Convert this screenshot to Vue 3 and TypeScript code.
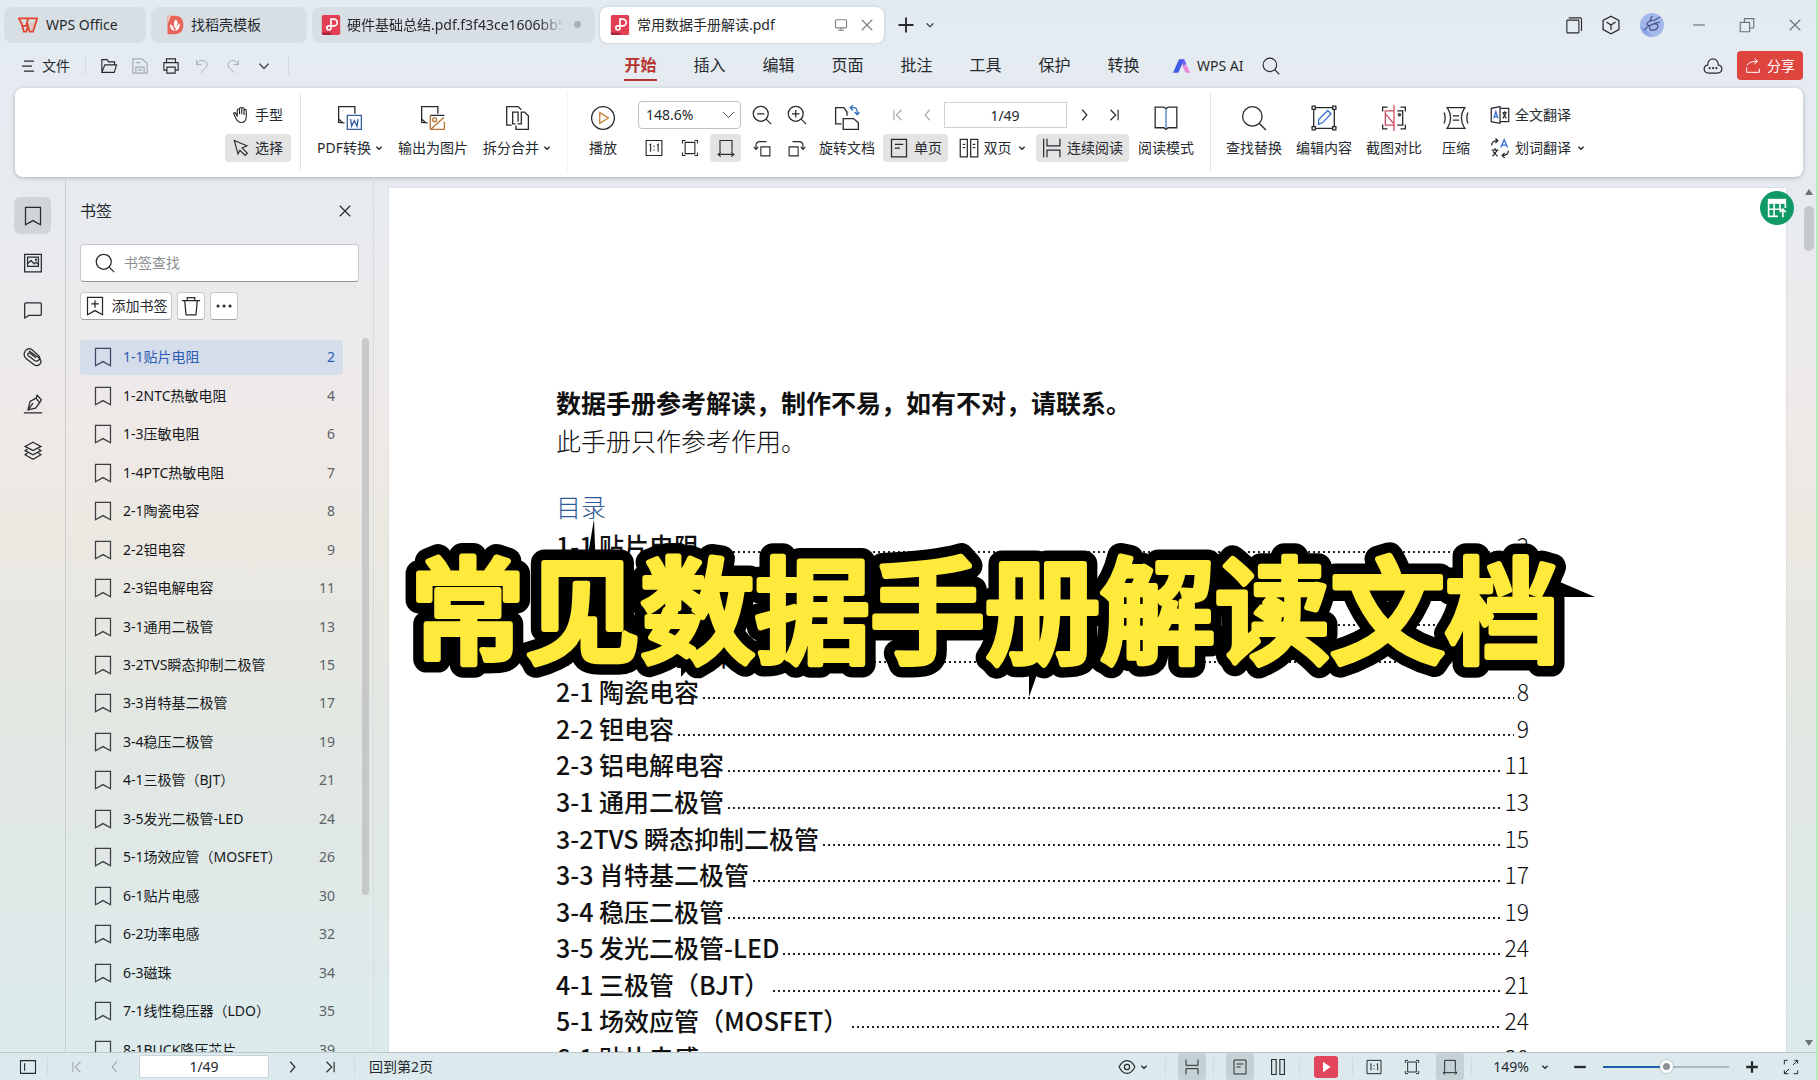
<script setup lang="ts">
import { ref } from 'vue'

interface Entry { label: string; page: number }

const bookmarks: Entry[] = [
  { label: '1-1贴片电阻', page: 2 },
  { label: '1-2NTC热敏电阻', page: 4 },
  { label: '1-3压敏电阻', page: 6 },
  { label: '1-4PTC热敏电阻', page: 7 },
  { label: '2-1陶瓷电容', page: 8 },
  { label: '2-2钽电容', page: 9 },
  { label: '2-3铝电解电容', page: 11 },
  { label: '3-1通用二极管', page: 13 },
  { label: '3-2TVS瞬态抑制二极管', page: 15 },
  { label: '3-3肖特基二极管', page: 17 },
  { label: '3-4稳压二极管', page: 19 },
  { label: '4-1三极管（BJT）', page: 21 },
  { label: '3-5发光二极管-LED', page: 24 },
  { label: '5-1场效应管（MOSFET）', page: 26 },
  { label: '6-1贴片电感', page: 30 },
  { label: '6-2功率电感', page: 32 },
  { label: '6-3磁珠', page: 34 },
  { label: '7-1线性稳压器（LDO）', page: 35 },
  { label: '8-1BUCK降压芯片', page: 39 },
]

const contents: Entry[] = [
  { label: '1-1 贴片电阻', page: 2 },
  { label: '1-2NTC 热敏电阻', page: 4 },
  { label: '1-3 压敏电阻', page: 6 },
  { label: '1-4PTC 热敏电阻', page: 7 },
  { label: '2-1 陶瓷电容', page: 8 },
  { label: '2-2 钽电容', page: 9 },
  { label: '2-3 铝电解电容', page: 11 },
  { label: '3-1 通用二极管', page: 13 },
  { label: '3-2TVS 瞬态抑制二极管', page: 15 },
  { label: '3-3 肖特基二极管', page: 17 },
  { label: '3-4 稳压二极管', page: 19 },
  { label: '3-5 发光二极管-LED', page: 24 },
  { label: '4-1 三极管（BJT）', page: 21 },
  { label: '5-1 场效应管（MOSFET）', page: 24 },
  { label: '6-1 贴片电感', page: 30 },
]

const menus = ['开始', '插入', '编辑', '页面', '批注', '工具', '保护', '转换']
const rail = [
  { icon: 'bookmark', name: '书签' },
  { icon: 'thumb', name: '缩略图' },
  { icon: 'comment', name: '批注' },
  { icon: 'clip', name: '附件' },
  { icon: 'sign', name: '签名' },
  { icon: 'layers', name: '图层' },
]
const activeMenu = ref('开始')
const activeRail = ref('bookmark')
const selected = ref(0)
const page = ref('1/49')
const zoom = ref(50)
</script>

<template>
  <svg class="sprite" aria-hidden="true">
    <symbol id="bookmark" viewBox="0 0 24 24"><path d="M3 1.500h18v21L12 17.500l-9 5z" /></symbol>
    <symbol id="thumb" viewBox="0 0 24 24"><path d="M2 1.500h20v21H2z M5.500 5h13v11h-13z M5.500 13l4-4 4 4 2-2 3 3" /><circle cx="15.500" cy="8" r=".6" /></symbol>
    <symbol id="comment" viewBox="0 0 24 24"><path d="M3.500 3.500h17a1.500 1.500 0 0 1 1.500 1.500v12a1.500 1.500 0 0 1-1.500 1.500H7l-5 3V5a1.500 1.500 0 0 1 1.500-1.500z" /></symbol>
    <symbol id="clip" viewBox="0 0 24 24"><path d="M7 4.500l12 8.500c6 5 0 12-6 8L4 14C-2 9 4-1 10.500 3l8 7c4 4-1 9-5 6L6.500 10.500c-2-2 0-4 2-3l7 5.500" /></symbol>
    <symbol id="sign" viewBox="0 0 24 24"><path d="M1 22.500h22M6 19l2.500-10 7-4 4.500 5.500-5 6.500zM6 19l6-8M15.500 5l1.500-3.500 5 5.500-2 3.500" /></symbol>
    <symbol id="layers" viewBox="0 0 24 24"><path d="M12 1.500l9.500 5L12 11.500l-9.500-5zM5.500 9.500l-3 2L12 16.500l9.500-5-3-2M5.500 14.500l-3 2L12 22l9.500-5.500-3-2" /></symbol>
    <symbol id="search" viewBox="0 0 24 24"><circle cx="10.500" cy="10.500" r="9" /><path d="M17 17L23 23" /></symbol>
    <symbol id="zoomout" viewBox="0 0 24 24"><circle cx="10.500" cy="10.500" r="9" /><path d="M17 17l6 6M6 10.500h9" /></symbol>
    <symbol id="zoomin" viewBox="0 0 24 24"><circle cx="10.500" cy="10.500" r="9" /><path d="M17 17l6 6M6 10.500h9M10.500 6v9" /></symbol>
    <symbol id="close" viewBox="0 0 24 24"><path d="M3 3l18 18M21 3L3 21" /></symbol>
    <symbol id="plus" viewBox="0 0 24 24"><path d="M12 2v20M2 12h20" /></symbol>
    <symbol id="down" viewBox="0 0 24 24"><path d="M4 8l8 8 8-8" /></symbol>
    <symbol id="left" viewBox="0 0 24 24"><path d="M15 3l-8 9 8 9" /></symbol>
    <symbol id="right" viewBox="0 0 24 24"><path d="M9 3l8 9-8 9" /></symbol>
    <symbol id="first" viewBox="0 0 24 24"><path d="M18 3l-9 9 9 9M5 3v18" /></symbol>
    <symbol id="last" viewBox="0 0 24 24"><path d="M6 3l9 9-9 9M19 3v18" /></symbol>
    <symbol id="wps" viewBox="0 0 24 24"><path d="M1 4h11l-2 9H5.500zM12 4h11l-5 16h-4l-2-7-2 7H7L4 9" fill="none" stroke="#e0452f" stroke-width="2.200" /><path d="M14 9h7l-3 10h-3z" fill="#f07a3c" stroke="none" opacity=".25" /></symbol>
    <symbol id="docer" viewBox="0 0 24 24"><path d="M3 1h8c8 0 11 4 11 11s-3 11-11 11H3z" fill="#e8645a" stroke="none" /><path d="M3 1h4L3 12z" fill="#f8c4b9" stroke="none" /><path d="M13 5c-3 4-3 7-1 11 4-4 4-7 1-11zM6 11c0 5 2 7 5 8 0-4-2-7-5-8zM18 10c-3 2-5 5-6 9 4 0 6-4 6-9z" fill="#fff" stroke="none" /></symbol>
    <symbol id="pdf" viewBox="0 0 24 24"><rect x="1" y="0" width="22" height="24" rx="2" fill="#e23f55" stroke="none" /><path d="M1 21h10l3 3H3a2 2 0 0 1-2-2z" fill="#a8253b" stroke="none" /><path d="M12 14V5h3.500a4 4 0 0 1 0 8H9a2.500 2.500 0 1 0 3 2.500V10" fill="none" stroke="#fff" stroke-width="2" /></symbol>
    <symbol id="screen" viewBox="0 0 24 24"><rect x="2.500" y="3" width="19" height="14" rx="2" /><path d="M12 17v4M7 21h10" /></symbol>
    <symbol id="open" viewBox="0 0 24 24"><path d="M2.500 20.500V3.500h7l2 3h8v4M2.500 20.500l4-10h15.500l-3 10z" /></symbol>
    <symbol id="save" viewBox="0 0 24 24"><path d="M6 21.500H2.500v-19h12l7 6v13H18M6.500 21.500v-8h11v8zM6.500 7.500h6M9 17.500h6" /></symbol>
    <symbol id="print" viewBox="0 0 24 24"><path d="M6 7V2.500h12V7M6 17.500H2.500v-10h19v10H18M6.500 13.500h11v8h-11z" /></symbol>
    <symbol id="undo" viewBox="0 0 24 24"><path d="M4 3v7h7M4 10c3-6 9-8 13-5s3 8-1 11l-6 6" /></symbol>
    <symbol id="redo" viewBox="0 0 24 24"><path d="M20 3v7h-7M20 10C17 4 11 2 7 5s-3 8 1 11l6 6" /></symbol>
    <symbol id="ai" viewBox="0 0 24 24"><path d="M0 21L8 3h7L7 21z" fill="#3d5be8" stroke="none" /><path d="M12 3h3l3 7-5 1z" fill="#6a5cf0" stroke="none" /><path d="M12 11h6l5 10h-6z" fill="#e58ad8" stroke="none" /></symbol>
    <symbol id="hand" viewBox="0 0 24 24"><path d="M7 14V5.500a1.500 1.500 0 0 1 3 0V11 3.500a1.500 1.500 0 0 1 3 0V11 3.500a1.500 1.500 0 0 1 3 0V12 6a1.500 1.500 0 0 1 3 0v8c0 5-2 8-6.500 8-4 0-5.500-2-7-5L2.500 11c-1-2 1.500-3 2.500-1z" /></symbol>
    <symbol id="cursor" viewBox="0 0 24 24"><path d="M3 2l17 7-6.500 3 7 7-3 3-7-7-2.500 5z" /></symbol>
    <symbol id="toword" viewBox="0 0 24 24"><path d="M7 16.500l-5.500-.5V1.500h15V8M1.500 13l4 3.500" /><path d="M9.500 9.500h13v13h-13z" stroke="#3a5d9c" /><path d="M12.500 13l1 6.500 2.500-5 2.500 5 1-6.500" stroke="#2d5aa8" /></symbol>
    <symbol id="toimg" viewBox="0 0 24 24"><path d="M7 16.500l-5.500-.5V1.500h15V8M1.500 13l4 3.500M9.500 9.500h13" /><path d="M9.500 22.500v-13M9.500 22.500h13v-7M10.500 22L22 11.500" stroke="#b87333" /><circle cx="13.500" cy="13.500" r="1.800" stroke="#b87333" /></symbol>
    <symbol id="split" viewBox="0 0 24 24"><path d="M7 18.500H2.500v-17h10.500L16 4.500M10.500 17.500H8V6.500h5v9M12.500 17.500h3.500V6.500h3l3.500 3.500v12.500H11V19" /></symbol>
    <symbol id="play" viewBox="0 0 24 24"><circle cx="12" cy="12" r="10.500" /><path d="M9 7l8 5-8 5z" stroke="#c98232" /></symbol>
    <symbol id="one" viewBox="0 0 24 24"><path d="M1.500 2h21v20h-21zM6 8l1.500-1v10M16 8l1.500-1v10M12 9v1.500M12 14v1.500" /></symbol>
    <symbol id="fit" viewBox="0 0 24 24"><path d="M5.500 4.500h13v15h-13zM2 6V2h4M18 2h4v4M22 18v4h-4M6 22H2v-4" /></symbol>
    <symbol id="width" viewBox="0 0 24 24"><path d="M4 17V2h16v15M1.500 20.500h21M5 17.500l-3.500 3L5 23.500M19 17.500l3.500 3-3.500 3" /></symbol>
    <symbol id="rotl" viewBox="0 0 24 24"><path d="M10.500 10.500h12v12h-12zM18 3.500H9q-5 0-5 6v4M1 10.500l3 3.500 3-3.500" /></symbol>
    <symbol id="rotr" viewBox="0 0 24 24"><path d="M1.500 10.500h12v12h-12zM6 3.500h9q5 0 5 6v4M17 10.500l3 3.500 3-3.500" /></symbol>
    <symbol id="rotdoc" viewBox="0 0 24 24"><path d="M7 17.500H1.500v-15H9l3 4V10M8.500 22.500v-10H18l4.500 4v6z" /><path d="M16 2.500h3q2.500 0 2.500 6M17.500 0L15 2.500 17.500 5M19 6.500l2.500 2.500 2-2.500" stroke="#2f6db5" /></symbol>
    <symbol id="single" viewBox="0 0 24 24"><path d="M3 1.500h18v21H3zM7 7.500h10M7 12h6" /></symbol>
    <symbol id="double" viewBox="0 0 24 24"><path d="M1.500 1.500h8.500v21H1.500zM14 1.500h8.500v21H14zM4.500 7.500h3M4.500 11.500h3M16.500 7.500h3M16.500 11.500h3" /></symbol>
    <symbol id="pages" viewBox="0 0 24 24"><path d="M3.500 2h6v20h-6zM14.500 2h6v20h-6z" /></symbol>
    <symbol id="cont" viewBox="0 0 24 24"><path d="M6 1v8.500h15.500V1M6 23v-8.500h15.500V23M2 1v22" /></symbol>
    <symbol id="flow" viewBox="0 0 24 24"><path d="M3 1v8.500h18V1M3 23v-8.500h18V23" /></symbol>
    <symbol id="book" viewBox="0 0 24 24"><path d="M12 3.500L10 2H2v19h8l2 1.500 2-1.500h8V2h-8z" /><path d="M12 4v17" stroke="#3f7fc1" /></symbol>
    <symbol id="editbox" viewBox="0 0 24 24"><path d="M4 2.500h16M4 21.500h16M2.500 4v16M21.500 4v16" /><path d="M1 1h3v3H1zM20 1h3v3h-3zM1 20h3v3H1zM20 20h3v3h-3z" fill="#fff" /><path d="M7 18v-4.500l8.500-8.500 3 3-7.500 8z" stroke="#3a6fd0" /></symbol>
    <symbol id="compare" viewBox="0 0 24 24"><path d="M1.500 6V2H6M18 2h4.500v4M22.500 18v4H18M6 22H1.500v-4M15 5.500h5v13h-5" /><circle cx="17" cy="9" r="1" /><path d="M11.500 5.500H4v13h7.500M4 8l7.500 9M12 0v24" stroke="#c94b63" /></symbol>
    <symbol id="compress" viewBox="0 0 24 24"><path d="M3 2.500h18M3 21.500h18M4 2.500q6 9.500 0 19M20 2.500q-6 9.500 0 19M9 10h6M9 14h6M1 7q2 5 0 10M23 7q-2 5 0 10" /></symbol>
    <symbol id="trans" viewBox="0 0 24 24"><path d="M12 2L1.500 4v16L12 22zM12 4h10.500v16H12M15 9h5M17.500 7.500V9M15.500 16l4-7M16 10l3.500 6" /><path d="M4.500 16L7 8l2.500 8M5.500 14h3" stroke="#2f6ad0" /></symbol>
    <symbol id="word" viewBox="0 0 24 24"><path d="M2 9q0-6 7-6M6.500.5L9.500 3l-3 3M22 15q0 6-7 6M17.500 18l-3 3 3 3M2 14.500h8M6 12v2.500M3 22l6-7.500M3.500 16l5.500 6" /><path d="M13 11.500L17 2l4 9.500M14.500 8.500h5" stroke="#2f6ad0" /></symbol>
    <symbol id="tabs" viewBox="0 0 24 24"><rect x="2.500" y="5.500" width="16" height="17" rx="1" /><path d="M5 2.500h15.500a1.500 1.500 0 0 1 1.500 1.500V20" /></symbol>
    <symbol id="cube" viewBox="0 0 24 24"><path d="M12 1.500l9.500 5v11L12 22.500l-9.500-5v-11zM6.500 8.500l5.500 3.500 5.500-3.500M12 12v6" /></symbol>
    <symbol id="min" viewBox="0 0 24 24"><path d="M2 12h20" /></symbol>
    <symbol id="restore" viewBox="0 0 24 24"><path d="M3 8.500h12.500V21H3zM8.500 8V3.500H21V16h-5" /></symbol>
    <symbol id="cloud" viewBox="0 0 24 24"><path d="M7 20.500c-7 0-7.500-9-1.500-9.500C6 1 18 1 18.500 11c6 .5 5.500 9.500-1.500 9.500z" /><path d="M8 14.500h.1M12 14.500h.1M16 14.500h.1" stroke-width="2.500" stroke-linecap="round" /></symbol>
    <symbol id="share" viewBox="0 0 24 24"><path d="M2.500 14v7.500h19V16M3 11q3-6 15-6M14 1l5 4-5 4" /></symbol>
    <symbol id="addmark" viewBox="0 0 24 24"><path d="M3 1.500h18v21L12 17.500l-9 5zM12 5v9M7.500 9.500h9" /></symbol>
    <symbol id="trash" viewBox="0 0 24 24"><path d="M1 5.500h22M7.500 5V2h9v3M4.500 5.500l1.500 17h12l1.500-17" /></symbol>
    <symbol id="more" viewBox="0 0 24 24"><path d="M3 12h.1M12 12h.1M21 12h.1" stroke-width="4.500" stroke-linecap="round" /></symbol>
    <symbol id="panel" viewBox="0 0 24 24"><path d="M2 3.500h20v17H2zM7.500 7v10" /></symbol>
    <symbol id="eye" viewBox="0 0 24 24"><path d="M1.500 12q4-8.500 10.500-8.500T22.500 12q-4 8.500-10.500 8.500T1.500 12z" /><circle cx="12" cy="12" r="3.500" /></symbol>
    <symbol id="full" viewBox="0 0 24 24"><path d="M2 8V2h5M17 2h5v5M15 9l7-7M22 17v5h-6M8 22H2v-5M2 22l7-7" /></symbol>
    <symbol id="table" viewBox="0 0 24 24"><path d="M1 1h22v6H1z" fill="#fff" stroke="none" /><path d="M2 5v17h11M8.500 6v16M15.500 6v9M22 6v6M2 13.500h15M19 23v-9M15.500 17l3.500-3.500 3.500 3.500" stroke="#fff" stroke-width="2" /></symbol>
  </svg>

  <div class="app">
    <header>
      <nav class="tabs" aria-label="标签页">
        <button class="tab t1"><svg class="i20"><use href="#wps" /></svg><span>WPS Office</span></button>
        <button class="tab t2"><svg class="i20"><use href="#docer" /></svg><span>找稻壳模板</span></button>
        <button class="tab t3"><svg class="i20"><use href="#pdf" /></svg><span class="fade">硬件基础总结.pdf.f3f43ce1606bb5</span><i class="unsaved"></i></button>
        <button class="tab t4 on"><svg class="i20"><use href="#pdf" /></svg><span class="grow">常用数据手册解读.pdf</span><svg class="i14 grey"><use href="#screen" /></svg><svg class="i14 grey"><use href="#close" /></svg></button>
        <button class="bare newtab" aria-label="新建"><svg class="i18 bold"><use href="#plus" /></svg></button>
        <button class="bare" aria-label="标签列表"><svg class="i10 bold"><use href="#down" /></svg></button>
        <div class="window">
          <button class="bare" aria-label="标签管理"><svg class="i18"><use href="#tabs" /></svg></button>
          <button class="bare" aria-label="应用"><svg class="i20"><use href="#cube" /></svg></button>
          <button class="bare avatar" aria-label="账号"><svg viewBox="0 0 24 24"><circle cx="12" cy="12" r="12" fill="#a3b8ea" stroke="none" /><path d="M0 13q8 4 12 11Q2 23 0 13z" fill="#8ba5e6" stroke="none" /><path d="M12 3l-2 5 5-1 5-3M10 8q-4 2-3 4 2 1 7-1 4-1 4 3-2 4-7 3-2-1-1-3M4 17q6-6 16-8" stroke="#46527f" stroke-width="1.200" /></svg></button>
          <button class="bare dim" aria-label="最小化"><svg class="i14"><use href="#min" /></svg></button>
          <button class="bare dim" aria-label="还原"><svg class="i18"><use href="#restore" /></svg></button>
          <button class="bare dim" aria-label="关闭"><svg class="i14"><use href="#close" /></svg></button>
        </div>
      </nav>

      <div class="menubar">
        <div class="quick">
          <button class="file"><svg class="i12" viewBox="0 0 24 24"><path d="M4 2h20M0 12h20M4 22h20" /></svg>文件</button>
          <i class="vline"></i>
          <button class="bare q" aria-label="打开"><svg class="i18"><use href="#open" /></svg></button>
          <button class="bare q off" aria-label="保存"><svg class="i18"><use href="#save" /></svg></button>
          <button class="bare q" aria-label="打印"><svg class="i18"><use href="#print" /></svg></button>
          <button class="bare q off" aria-label="撤销"><svg class="i16"><use href="#undo" /></svg></button>
          <button class="bare q off" aria-label="恢复"><svg class="i16"><use href="#redo" /></svg></button>
          <button class="bare q" aria-label="更多"><svg class="i14"><use href="#down" /></svg></button>
          <i class="vline"></i>
        </div>
        <button v-for="m in menus" :key="m" class="menu" :class="{ on: m === activeMenu }" @click="activeMenu = m"><span>{{ m }}</span></button>
        <button class="ai"><svg class="i18"><use href="#ai" /></svg>WPS AI</button>
        <button class="bare" aria-label="搜索"><svg class="i18"><use href="#search" /></svg></button>
        <button class="bare cloud" aria-label="云同步"><svg class="i20"><use href="#cloud" /></svg></button>
        <button class="share"><svg class="i16"><use href="#share" /></svg>分享</button>
      </div>

      <div class="ribbon">
        <div class="stack tools">
          <button class="small"><svg class="i18"><use href="#hand" /></svg>手型</button>
          <button class="small on"><svg class="i18"><use href="#cursor" /></svg>选择</button>
        </div>
        <i class="rule"></i>
        <div class="set convert">
          <button class="big"><svg class="i24"><use href="#toword" /></svg><span>PDF转换<svg class="caret"><use href="#down" /></svg></span></button>
          <button class="big"><svg class="i24"><use href="#toimg" /></svg><span>输出为图片</span></button>
          <button class="big"><svg class="i24"><use href="#split" /></svg><span>拆分合并<svg class="caret"><use href="#down" /></svg></span></button>
        </div>
        <i class="rule"></i>
        <div class="set view">
          <button class="big"><svg class="i24"><use href="#play" /></svg><span>播放</span></button>
          <div class="zoomgrid">
            <select class="zoomsel" aria-label="缩放比例"><option>148.6%</option></select>
            <button class="bare" aria-label="缩小"><svg class="i20"><use href="#zoomout" /></svg></button>
            <button class="bare" aria-label="放大"><svg class="i20"><use href="#zoomin" /></svg></button>
            <button class="bare" aria-label="实际大小"><svg class="i18"><use href="#one" /></svg></button>
            <button class="bare" aria-label="适合页面"><svg class="i18"><use href="#fit" /></svg></button>
            <button class="bare on" aria-label="适合宽度"><svg class="i18"><use href="#width" /></svg></button>
            <button class="bare" aria-label="向左旋转"><svg class="i18"><use href="#rotl" /></svg></button>
            <button class="bare" aria-label="向右旋转"><svg class="i18"><use href="#rotr" /></svg></button>
          </div>
          <button class="big rot"><svg class="i24"><use href="#rotdoc" /></svg><span>旋转文档</span></button>
          <div class="stack paging">
            <div class="pager">
              <button class="bare off" aria-label="首页"><svg class="i14"><use href="#first" /></svg></button>
              <button class="bare off" aria-label="上一页"><svg class="i14"><use href="#left" /></svg></button>
              <input v-model="page" aria-label="页码" />
              <button class="bare" aria-label="下一页"><svg class="i14"><use href="#right" /></svg></button>
              <button class="bare" aria-label="末页"><svg class="i14"><use href="#last" /></svg></button>
            </div>
            <div class="modes">
              <button class="small on"><svg class="i20"><use href="#single" /></svg>单页</button>
              <button class="small"><svg class="i20"><use href="#double" /></svg>双页<svg class="caret"><use href="#down" /></svg></button>
              <button class="small on"><svg class="i20"><use href="#cont" /></svg>连续阅读</button>
            </div>
          </div>
          <button class="big"><svg class="i24"><use href="#book" /></svg><span>阅读模式</span></button>
        </div>
        <i class="rule"></i>
        <div class="set edit">
          <button class="big"><svg class="i24"><use href="#search" /></svg><span>查找替换</span></button>
          <button class="big"><svg class="i24"><use href="#editbox" /></svg><span>编辑内容</span></button>
          <button class="big"><svg class="i24"><use href="#compare" /></svg><span>截图对比</span></button>
          <button class="big zip"><svg class="i24"><use href="#compress" /></svg><span>压缩</span></button>
          <div class="stack">
            <button class="small"><svg class="i20"><use href="#trans" /></svg>全文翻译</button>
            <button class="small"><svg class="i20"><use href="#word" /></svg>划词翻译<svg class="caret near"><use href="#down" /></svg></button>
          </div>
        </div>
      </div>
    </header>

    <main>
      <nav class="rail" aria-label="侧栏">
        <button v-for="r in rail" :key="r.icon" class="bare" :class="{ on: r.icon === activeRail }" :aria-label="r.name" @click="activeRail = r.icon"><svg class="i20"><use :href="'#' + r.icon" /></svg></button>
      </nav>

      <aside class="panel">
        <div class="head"><h2>书签</h2><button class="bare" aria-label="关闭书签"><svg class="i14"><use href="#close" /></svg></button></div>
        <label class="find"><svg class="i20"><use href="#search" /></svg><input placeholder="书签查找" aria-label="书签查找" /></label>
        <div class="acts">
          <button class="add"><svg class="i20"><use href="#addmark" /></svg>添加书签</button>
          <button class="sq" aria-label="删除"><svg class="i20"><use href="#trash" /></svg></button>
          <button class="sq" aria-label="更多"><svg class="i16"><use href="#more" /></svg></button>
        </div>
        <div class="listbox">
          <ul>
            <li v-for="(b, n) in bookmarks" :key="b.label">
              <button class="mark" :class="{ on: n === selected }" @click="selected = n"><svg class="i20"><use href="#bookmark" /></svg><span>{{ b.label }}</span><em>{{ b.page }}</em></button>
            </li>
          </ul>
          <i class="thumb"></i>
        </div>
      </aside>

      <section class="viewer">
        <article class="paper">
          <p class="strong">数据手册参考解读，制作不易，如有不对，请联系。</p>
          <p>此手册只作参考作用。</p>
          <h1>目录</h1>
          <ol class="toc">
            <li v-for="c in contents" :key="c.label"><a href="#">{{ c.label }}</a><i></i><span>{{ c.page }}</span></li>
          </ol>
        </article>
        <svg class="headline" viewBox="0 0 1220 200" role="img" aria-label="常见数据手册解读文档">
          <path class="spike" d="M200 4l-9 54h11zM1145 58l56 24h-56zM635 148v34l12-34zM287 144v18l14-16z" />
          <use class="outline" href="#headline-text" />
          <g class="face"><text id="headline-text" x="16" y="139">常见数据手册解读文档</text></g>
        </svg>
        <button class="float" aria-label="转为表格"><svg class="i20"><use href="#table" /></svg></button>
        <div class="vscroll"><i class="up"></i><i class="bar"></i><i class="down"></i></div>
      </section>
    </main>

    <footer>
      <div class="left">
        <button class="bare" aria-label="面板"><svg class="i18"><use href="#panel" /></svg></button>
        <i class="vline"></i>
        <button class="bare off" aria-label="首页"><svg class="i14"><use href="#first" /></svg></button>
        <button class="bare off" aria-label="上一页"><svg class="i14"><use href="#left" /></svg></button>
        <input v-model="page" aria-label="当前页" />
        <button class="bare" aria-label="下一页"><svg class="i14"><use href="#right" /></svg></button>
        <button class="bare" aria-label="末页"><svg class="i14"><use href="#last" /></svg></button>
        <i class="vline"></i>
        <a href="#">回到第2页</a>
      </div>
      <div class="right">
        <button class="bare eye" aria-label="护眼"><svg class="i18"><use href="#eye" /></svg><svg class="caret"><use href="#down" /></svg></button>
        <i class="vline"></i>
        <button class="bare on" aria-label="连续"><svg class="i16"><use href="#flow" /></svg></button>
        <i class="vline"></i>
        <button class="bare on" aria-label="单页"><svg class="i16"><use href="#single" /></svg></button>
        <button class="bare" aria-label="双页"><svg class="i18"><use href="#pages" /></svg></button>
        <i class="vline"></i>
        <button class="bare red" aria-label="播放"><svg viewBox="0 0 24 24"><path d="M8 5l10 7-10 7z" /></svg></button>
        <i class="vline"></i>
        <button class="bare" aria-label="实际大小"><svg class="i16"><use href="#one" /></svg></button>
        <button class="bare" aria-label="适合页面"><svg class="i16"><use href="#fit" /></svg></button>
        <button class="bare on" aria-label="适合宽度"><svg class="i16"><use href="#width" /></svg></button>
        <i class="vline"></i>
        <button class="bare pct">149%<svg class="caret"><use href="#down" /></svg></button>
        <button class="bare" aria-label="缩小"><svg class="i14 heavy"><use href="#min" /></svg></button>
        <input v-model="zoom" type="range" min="0" max="100" aria-label="缩放" />
        <button class="bare" aria-label="放大"><svg class="i14 heavy"><use href="#plus" /></svg></button>
        <button class="bare last" aria-label="全屏"><svg class="i16"><use href="#full" /></svg></button>
      </div>
    </footer>
  </div>
</template>

<style>
body { margin: 0; overflow: hidden; }
</style>

<style scoped>
.sprite { position: absolute; width: 0; height: 0; }
.app {
  box-sizing: border-box; display: flex; flex-direction: column; height: 100vh; overflow: hidden;
  border-right: 2px solid #b4ecba; color: #262a2e;
  font: 14px/20px "Noto Sans", "Noto Sans CJK SC", sans-serif;
  background: linear-gradient(180deg, #e3ebf1 0, #e7ebf0 200px, #efe9e7 430px, #ebe8e1 540px, #e3e7e2 700px, #dfe9e8 900px, #dcebed 100%);
}
button, input, select { font: inherit; color: inherit; }
button { display: flex; align-items: center; border: 0; padding: 0; background: none; white-space: nowrap; }
svg { fill: none; stroke: currentColor; stroke-width: 1.5; flex: none; }
ul, ol { list-style: none; margin: 0; padding: 0; }
.i10 { width: 10px; height: 10px; stroke-width: 2.5; }
.i12 { width: 12px; height: 12px; stroke-width: 2.5; }
.i14 { width: 14px; height: 14px; stroke-width: 2; }
.i16 { width: 16px; height: 16px; }
.i18 { width: 18px; height: 18px; }
.i20 { width: 20px; height: 20px; }
.i24 { width: 26px; height: 26px; stroke-width: 1.2; }
.caret { width: 8px; height: 8px; stroke-width: 4; margin-left: 4px; }
.bold { stroke-width: 2.5; }
.heavy { stroke-width: 4; }
.bare { justify-content: center; }
.off { color: #a4abb1; }
.vline { width: 1px; height: 18px; background: #d2dae0; }

.tabs { display: flex; align-items: center; height: 49px; padding-left: 4px; }
.tab { box-sizing: border-box; height: 36px; border-radius: 8px; background: #d7dfe5; padding: 0 14px; gap: 8px; margin-right: 5px; overflow: hidden; }
.t1 { width: 142px; }
.t2 { width: 156px; gap: 6px; }
.t3 { width: 283px; padding: 0 14px 0 9px; gap: 6px; }
.t4 { width: 284px; padding: 0 10px 0 10px; gap: 7px; margin-right: 13px; }
.tab.on { background: #fff; box-shadow: 0 0 3px #b9c3cb; }
.t4 .grey + .grey { margin-left: 5px; }
.grow { flex: 1; text-align: left; }
.grey { color: #7d848a; }
.fade { flex: 1; overflow: hidden; text-align: left; mask-image: linear-gradient(90deg, #000 88%, transparent); }
.unsaved { width: 7px; height: 7px; border-radius: 50%; background: #a9b1b8; margin-left: 4px; }
.newtab { margin-right: 10px; }
.window { display: flex; align-items: center; margin-left: auto; padding-right: 3px; }
.window button { width: 37px; height: 36px; }
.window .avatar { width: 46px; }
.avatar svg { width: 24px; height: 24px; }
.window .dim { width: 48px; color: #6b7278; }
.window .dim:last-child { width: 36px; margin-left: 6px; }

.menubar { display: flex; align-items: center; height: 33px; margin-bottom: 6px; padding-right: 13px; }
.quick { display: flex; align-items: center; width: 606px; padding-left: 22px; box-sizing: border-box; }
.file { gap: 8px; margin-right: 15px; }
.q { width: 31px; height: 28px; }
.vline + .q { margin-left: 7px; }
.q + .vline { margin-left: 9px; }
.menu { justify-content: center; flex: 0 1 69px; height: 33px; font-size: 16px; }
.menu span { padding-top: 2px; line-height: 27px; border-bottom: 2px solid transparent; }
.menu.on { color: #b5332f; font-weight: 700; }
.menu.on span { border-color: #b5332f; }
.ai { gap: 6px; margin: 0 18px 0 15px; }
.cloud { margin-left: auto; margin-right: 14px; }
.share { width: 66px; height: 29px; border-radius: 4px; justify-content: center; gap: 6px; background: #df453f; color: #fff; }

.ribbon { display: flex; height: 89px; box-sizing: border-box; margin: 0 13px 0 15px; border-radius: 8px; background: #fff; box-shadow: 0 1px 4px #a9b3bb; padding: 13px 0 14px; }
.rule { width: 1px; margin: -8px 0; background: #e2e4e6; }
.convert + .rule { background: #f1f2f3; }
.stack { display: flex; flex-direction: column; gap: 5px; }
.small { height: 28px; gap: 6px; padding: 0 7px; border-radius: 4px; }
.on.small, .zoomgrid .on { background: #e3e3e4; border-radius: 4px; }
.tools { padding-left: 210px; margin-right: 9px; }
.tools .small { width: 66px; gap: 5px; }
.set { display: flex; }
.big { flex-direction: column; justify-content: space-between; height: 61px; padding: 4px 0; box-sizing: border-box; }
.big span { display: flex; align-items: center; }
.convert { padding-left: 16px; gap: 15px; width: 266px; box-sizing: border-box; }
.view { padding-left: 21px; width: 642px; box-sizing: border-box; }
.edit { padding-left: 15px; gap: 14px; }
.zip { margin: 0 6px; }
.edit .small { padding: 0; gap: 5px; }
.zoomgrid { display: grid; grid-template-columns: 31px 41px 31px 41px 29px; grid-template-rows: 28px 28px; row-gap: 5px; margin-left: 21px; }
.zoomsel { grid-column: 1 / 4; border: 1px solid #bfc3c7; border-radius: 4px; padding: 0 7px; appearance: none; background-color: #fff; background-image: linear-gradient(45deg, transparent 46%, #555 46%, #555 54%, transparent 54%), linear-gradient(-45deg, transparent 46%, #555 46%, #555 54%, transparent 54%); background-size: 6px 6px; background-position: right 11px center, right 6px center; background-repeat: no-repeat; }
.rot { margin-left: 8px; }
.paging { margin: 0 9px 0 8px; width: 246px; }
.pager { display: flex; align-items: center; height: 28px; }
.pager button { width: 31px; }
.pager input { box-sizing: border-box; width: 123px; height: 26px; border: 1px solid #cfd2d5; text-align: center; padding: 0; background: #fff; }
.pager input + button { margin-left: 2px; }
.modes { display: flex; justify-content: space-between; }
.modes .small { gap: 5px; padding: 0 6px; }
.modes .caret, .near { margin-left: 1px; }

main { flex: 1; min-height: 0; display: flex; }
.rail { width: 66px; display: flex; flex-direction: column; align-items: center; gap: 10px; padding-top: 20px; border-right: 1px solid #c9ced1; box-sizing: border-box; }
.rail button { width: 37px; height: 37px; border-radius: 6px; }
.rail .on { background: #d2d5d7; }
.panel { width: 308px; box-sizing: border-box; padding: 0 4px 0 14px; display: flex; flex-direction: column; border-right: 1px solid #d9dddf; overflow: hidden; }
.head { display: flex; flex: none; justify-content: space-between; align-items: center; height: 67px; padding-right: 17px; }
h2 { margin: 0; font-size: 16px; font-weight: 400; }
.find { box-sizing: border-box; flex: none; display: flex; align-items: center; gap: 9px; width: 279px; height: 38px; padding: 0 14px; background: #fff; border: 1px solid #c6cacd; border-bottom-color: #8e9498; border-radius: 4px; }
.find input { border: 0; width: 180px; padding: 0; outline: 0; background: none; }
.find input::placeholder { color: #8b8f93; opacity: 1; }
.acts { display: flex; gap: 5px; margin: 10px 0 18px; }
.acts button { box-sizing: border-box; height: 28px; justify-content: center; background: #fff; border: 1px solid #c6cacd; border-bottom-color: #9da2a6; border-radius: 4px; }
.add { width: 92px; gap: 7px; }
.sq { width: 28px; }
.listbox { display: flex; justify-content: space-between; flex: 1; min-height: 0; }
.listbox ul { display: grid; grid-auto-rows: 1fr; align-items: center; width: 263px; height: 731px; }
.mark { width: 100%; height: 35px; box-sizing: border-box; padding: 0 8px 0 13px; border-radius: 4px; gap: 10px; color: #15181b; }
.mark em { margin-left: auto; font-style: normal; color: #5d6266; }
.mark svg { color: #3a3e42; }
.mark.on { background: #d5dcea; color: #2c5db4; }
.mark.on svg { color: #3a4a66; }
.mark.on em { color: #2c5db4; }
.thumb { width: 7px; height: 557px; border-radius: 4px; background: #c7c9c9; }

.viewer { flex: 1; display: flex; position: relative; padding: 11px 30px 0 15px; }
.paper { flex: 1; background: #fff; padding: 195px 257px 0 167px; overflow: hidden; box-shadow: 0 0 1px #a9b0b4; color: #101010; font: 25px/38px "Noto Sans CJK SC", sans-serif; }
.paper p { margin: 0; font-weight: 300; }
.paper p.strong { font-weight: 700; }
h1 { margin: 28px 0 0; font: 300 25px/38px "Noto Sans CJK SC", sans-serif; color: #2f5a94; }
.toc { display: grid; grid-auto-rows: 1fr; height: 548px; margin-top: 2px; line-height: 36px; }
.toc li { display: flex; align-items: center; }
.toc a { color: inherit; text-decoration: none; font-weight: 500; white-space: pre; }
.toc i { flex: 1; height: 2px; margin: 14px 3px 0 4px; background: repeating-linear-gradient(90deg, #222 0, #222 2px, transparent 2px, transparent 5px); }
.toc span { font-size: 23px; font-weight: 300; }
.headline { position: absolute; left: 20px; top: 338px; width: 1220px; height: 200px; }
.headline text { font: 500 115px/1 "Noto Sans CJK SC", sans-serif; }
.outline { fill: #000; stroke: #000; stroke-width: 27; stroke-linejoin: round; }
.face { fill: #ffe93b; stroke: #ffe93b; stroke-width: 6; stroke-linejoin: round; }
.spike { fill: #000; stroke: none; }
.float { position: absolute; right: 22px; top: 14px; width: 34px; height: 34px; border-radius: 50%; background: #109a66; justify-content: center; }
.vscroll { position: absolute; right: 2px; top: 0; bottom: 0; width: 11px; display: flex; flex-direction: column; align-items: center; padding: 12px 0 6px; box-sizing: border-box; }
.up, .down { border: 4px solid transparent; }
.up { border-top: 0; border-bottom: 6px solid #6d7276; }
.down { border-bottom: 0; border-top: 6px solid #6d7276; margin-top: auto; }
.bar { width: 10px; height: 45px; border-radius: 5px; background: #c5c9cd; margin-top: 11px; }

footer { display: flex; justify-content: space-between; height: 28px; box-sizing: border-box; border-top: 1px solid #bfc8ca; background: #dceaed; padding-left: 9px; }
.left, .right { display: flex; align-items: center; }
.left .bare { width: 38px; height: 26px; }
.left > .vline { margin-right: 10px; }
.left input { box-sizing: border-box; width: 130px; height: 23px; border: 1px solid #c9d4d7; border-radius: 2px; background: #fff; text-align: center; padding: 0; margin: 0 4px 0 5px; }
.left .bare:nth-of-type(5) ~ .vline { margin: 0 14px 0 5px; }
.left a { color: inherit; text-decoration: none; }
.right .bare { width: 28px; height: 27px; border-radius: 3px; margin: 0 5px; }
.right .vline { margin: 0 2px; }
.right .bare.on { background: #c5d2d5; }
.right .bare.eye { width: 34px; margin-right: 13px; }
.vline + .bare.on { margin-left: 10px; }
.right .bare.red { width: 24px; height: 22px; background: #e2445c; margin: 0 12px; }
.red svg { width: 18px; fill: #fff; stroke: none; }
.right .bare.pct { width: 70px; gap: 8px; margin-left: 12px; }
.right input { appearance: none; width: 126px; height: 14px; margin: 0 4px; background: linear-gradient(90deg, #1f5ea8 50%, #adb8bc 50%) center / 100% 2px no-repeat; }
.right input::-webkit-slider-thumb { appearance: none; width: 13px; height: 13px; border-radius: 50%; border: 3px solid #fff; background: #8b9196; box-shadow: 0 0 2px #8b9196; }
.right .last { margin: 0 11px 0 6px; }
</style>
